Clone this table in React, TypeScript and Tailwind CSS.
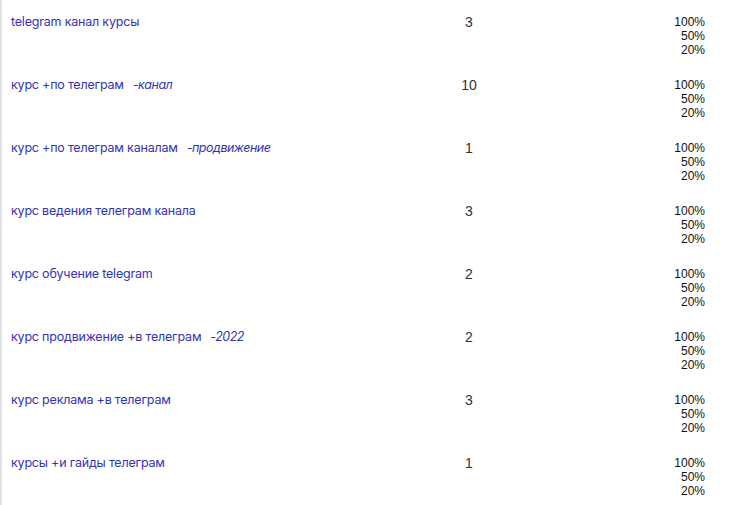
import React from "react";

type Row = { phrase: string; minus?: string; count: number };

const rows: Row[] = [
  { phrase: "telegram канал курсы", count: 3 },
  { phrase: "курс +по телеграм", minus: "-канал", count: 10 },
  { phrase: "курс +по телеграм каналам", minus: "-продвижение", count: 1 },
  { phrase: "курс ведения телеграм канала", count: 3 },
  { phrase: "курс обучение telegram", count: 2 },
  { phrase: "курс продвижение +в телеграм", minus: "-2022", count: 2 },
  { phrase: "курс реклама +в телеграм", count: 3 },
  { phrase: "курсы +и гайды телеграм", count: 1 },
];

export default function App() {
  return (
    <div className="w-[750px] h-[505px] bg-white overflow-hidden border-l-2 border-[#e3e3e3]">
      {rows.map((r, i) => (
        <div key={i} className="h-[63px] grid grid-cols-[428px_60px_1fr] pl-[9px] pr-[45px] pt-[13px]">
          <div
            className="text-[12.5px] leading-[18px] tracking-[-0.2px] text-[#3434b0] whitespace-nowrap"
            style={{ fontFamily: "Inter, 'Noto Sans', sans-serif" }}
          >
            {r.phrase}
            {r.minus && <span className="italic ml-[9px] tracking-[-0.5px]">{r.minus}</span>}
          </div>
          <div
            className="text-center text-[14px] leading-[18px] text-[#333]"
            style={{ fontFamily: "'Liberation Sans', Arial, sans-serif" }}
          >
            {r.count}
          </div>
          <div
            className="flex flex-col items-end text-[12px] leading-[14px] text-[#111] pt-[2px]"
            style={{ fontFamily: "'Liberation Sans', Arial, sans-serif" }}
          >
            <span>100%</span>
            <span>50%</span>
            <span>20%</span>
          </div>
        </div>
      ))}
    </div>
  );
}
